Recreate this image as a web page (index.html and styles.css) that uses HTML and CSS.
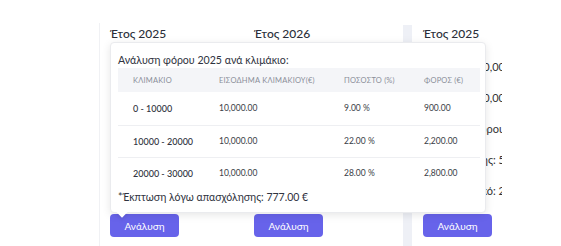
FILE: index.html
```html
<!DOCTYPE html>
<html lang="el">
<head>
<meta charset="utf-8">
<title>Φόρος ανά έτος</title>
<link rel="stylesheet" href="styles.css">
</head>
<body>
<div class="board">
  <div class="panel">
    <div class="card c1">
      <h2 class="year">Έτος 2025</h2>
      <div class="lines"></div>
      <button class="btn">Ανάλυση</button>

      <div class="popover">
        <div class="pop-title">Ανάλυση φόρου 2025 ανά κλιμάκιο:</div>
        <table class="tbl">
          <thead>
            <tr><th class="w1">Κλιμακιο</th><th class="w2">Εισοδημα κλιμακιου(€)</th><th class="w3">Ποσοστο (%)</th><th class="w4">Φορος (€)</th></tr>
          </thead>
          <tbody>
            <tr><td class="band">0 - 10000</td><td>10,000.00</td><td>9.00 %</td><td>900.00</td></tr>
            <tr><td class="band">10000 - 20000</td><td>10,000.00</td><td>22.00 %</td><td>2,200.00</td></tr>
            <tr class="last"><td class="band">20000 - 30000</td><td>10,000.00</td><td>28.00 %</td><td>2,800.00</td></tr>
          </tbody>
        </table>
        <div class="pop-foot">*Έκπτωση λόγω απασχόλησης: 777.00 €</div>
        <span class="arrow"></span>
      </div>
    </div>
    <div class="card c2">
      <h2 class="year">Έτος 2026</h2>
      <div class="lines"></div>
      <button class="btn">Ανάλυση</button>
    </div>
  </div>
  <div class="strip"></div>
  <div class="card c3">
    <h2 class="year">Έτος 2025</h2>
    <div class="lines">
      <div class="line clip"><span class="tail">Εισόδημα: 30,00</span></div>
      <div class="line clip"><span class="tail">Φόρος: 3,900,00</span></div>
      <div class="line clip"><span class="tail">Ανάλυση φόρου</span></div>
      <div class="line clip"><span class="tail">απασχόλησης: 5</span></div>
      <div class="line clip"><span class="tail">Τελικό: 2</span></div>
    </div>
    <button class="btn">Ανάλυση</button>
  </div>
</div>
</body>
</html>
```
FILE: styles.css
```css
* { box-sizing: border-box; }
html, body { margin: 0; padding: 0; background: #ffffff; }
body {
  font-family: Lato, Roboto, "Noto Sans", sans-serif;
  color: #2f3340;
  width: 561px;
  height: 246px;
  overflow: hidden;
}
.board {
  display: flex;
  align-items: stretch;
  padding-top: 23px;
  padding-left: 99px;
  height: 246px;
}
.panel {
  display: flex;
  border-left: 1px solid #f0f1f4;
  background: #fff;
}
.card {
  position: relative;
  padding: 2px 0 0 10px;
  display: flex;
  flex-direction: column;
  align-items: flex-start;
}
.c1 { width: 143px; }
.c2 { width: 160px; padding-left: 11px; }
.c3 { width: 90px; padding-left: 11px; overflow: hidden; }
.strip {
  width: 9px;
  margin-top: 2px;
  background: #eef0f6;
}
.year {
  margin: 0;
  font-size: 12px;
  line-height: 17px;
  font-weight: 500;
  color: #2b2f3a;
}
.lines {
  margin-top: 9px;
  width: 100%;
  height: 155px;
}
.line {
  height: 31px;
  line-height: 31px;
  font-size: 11px;
  white-space: nowrap;
  color: #333;
}
.clip {
  display: flex;
  justify-content: flex-end;
  overflow: hidden;
}
.tail { margin-right: -3px; }
.btn {
  margin-top: 8px;
  width: 69px;
  height: 23px;
  border: 0;
  border-radius: 4px;
  background: #6763ea;
  color: #fff;
  font-family: Lato, Roboto, sans-serif;
  font-size: 10px;
  padding: 0;
}
.popover {
  position: absolute;
  top: 19px;
  left: 10px;
  width: 376px;
  height: 171px;
  background: #fff;
  border: 1px solid #eaebee;
  border-radius: 4px;
  box-shadow: 0 2px 8px rgba(0, 0, 0, 0.10);
  padding: 9px 6px 0 7px;
  z-index: 5;
}
.pop-title {
  font-size: 10.6px;
  line-height: 16px;
  color: #2f3340;
}
.tbl {
  width: 362px;
  border-collapse: collapse;
  table-layout: fixed;
}
.tbl th {
  background: #f4f5f8;
  height: 24px;
  padding: 0 0 0 15px;
  text-align: left;
  font-weight: 400;
  font-size: 7.5px;
  letter-spacing: 0.2px;
  text-transform: uppercase;
  color: #8a8e98;
  white-space: nowrap;
}
.w1 { width: 86px; }
.w2 { width: 125px; }
.w3 { width: 80px; }
.w4 { width: 71px; }
.tbl td {
  padding: 0 0 0 15px;
  height: 32px;
  font-size: 8.5px;
  color: #3a3d46;
  border-bottom: 1px solid #eeeff2;
  white-space: nowrap;
}
.tbl tbody tr:first-child td { height: 33px; }
.tbl tr.last td { border-bottom: 0; }
.tbl td.band {
  font-size: 9px;
  font-weight: 500;
  color: #2f3340;
}
.pop-foot {
  font-size: 10.5px;
  line-height: 16px;
  color: #2f3340;
}
.arrow {
  position: absolute;
  left: 7px;
  bottom: -4px;
  width: 8px;
  height: 8px;
  background: #fff;
  transform: rotate(45deg);
  box-shadow: 2px 2px 3px rgba(0, 0, 0, 0.06);
}
```
